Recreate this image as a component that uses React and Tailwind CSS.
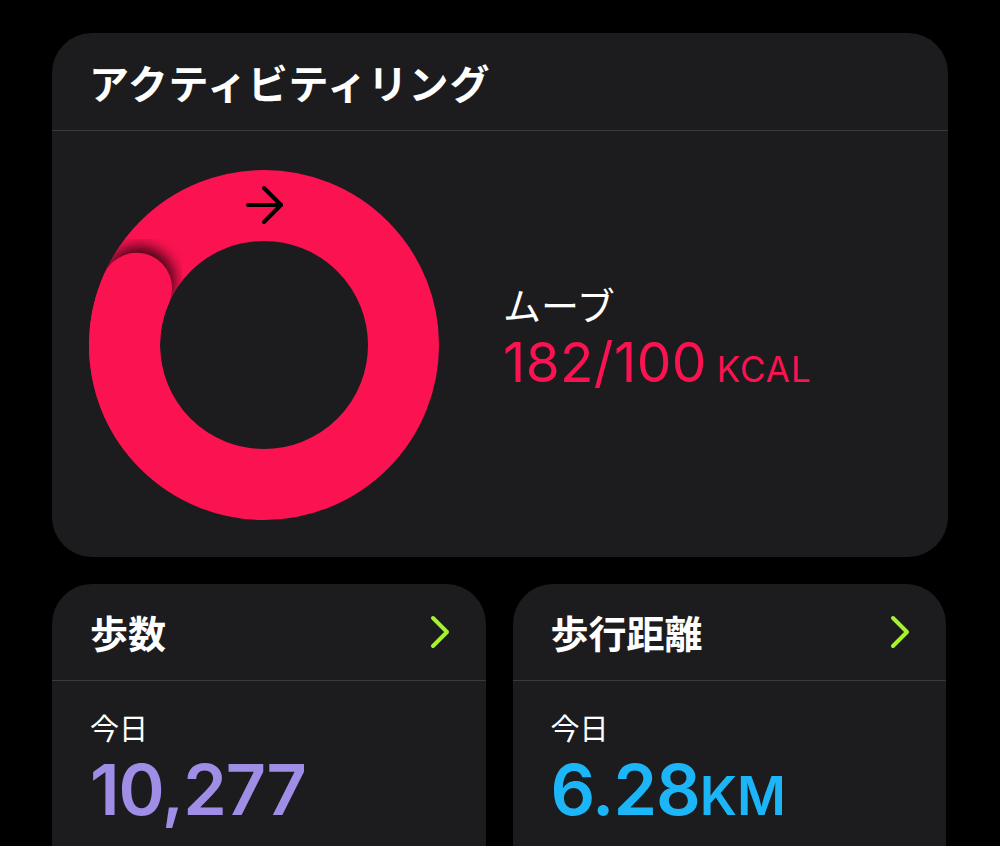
import React from 'react';

const jp = { fontFamily: '"Noto Sans CJK JP", "Noto Sans", sans-serif' };
const num = { fontFamily: 'Inter, "Noto Sans CJK JP", sans-serif' };

function Chevron() {
  return (
    <svg width="22" height="34" viewBox="0 0 22 34" fill="none">
      <polyline points="4,3 18,17 4,31" stroke="#a6f32d" strokeWidth="4" strokeLinecap="round" strokeLinejoin="round" />
    </svg>
  );
}

function MoveRing() {
  const cx = 175;
  const r = 139.5;
  return (
    <svg width="350" height="350" viewBox="0 0 350 350" className="shrink-0">
      <defs>
        <filter id="capShadow" x="-50%" y="-50%" width="200%" height="200%">
          <feGaussianBlur stdDeviation="7" />
        </filter>
        <mask id="ringMask">
          <circle cx={cx} cy={cx} r={r} stroke="white" strokeWidth="71" fill="none" />
        </mask>
      </defs>
      <circle cx={cx} cy={cx} r={r} stroke="#fb1351" strokeWidth="71" fill="none" />
      <g mask="url(#ringMask)">
        <circle cx="50.5" cy="111.5" r="35.5" fill="#000" opacity="0.75" filter="url(#capShadow)" />
      </g>
      <path d="M 62.1 257 A 139.5 139.5 0 0 1 47.6 118.3" stroke="#fb1351" strokeWidth="71" strokeLinecap="round" fill="none" />
      <g stroke="#000" strokeWidth="4" strokeLinecap="round" strokeLinejoin="round" fill="none">
        <line x1="159" y1="35" x2="192" y2="35" />
        <polyline points="175,18 192,35 175,52" />
      </g>
    </svg>
  );
}

function StatCard({ title, value, unit, color }) {
  return (
    <div className="flex-1 rounded-[40px] bg-[#1c1c1e] h-[300px]">
      <div className="flex h-[97px] items-center justify-between border-b border-[#3a3a3c] pl-[38px] pr-[35px]">
        <span className="text-[38px] font-bold text-white leading-none" style={jp}>{title}</span>
        <Chevron />
      </div>
      <div className="pl-[38px] pt-[28px]">
        <div className="text-[29px] text-white leading-[36px]" style={jp}>今日</div>
        <div className="mt-[10px] flex items-baseline font-semibold leading-none" style={{ ...num, color }}>
          <span className="text-[70px] tracking-[-1px]">{value}</span>
          {unit && <span className="text-[53px]">{unit}</span>}
        </div>
      </div>
    </div>
  );
}

export default function App() {
  return (
    <div className="min-h-screen bg-black pl-[52px] pr-[52px] pt-[33px] overflow-hidden h-[846px]">
      <div className="rounded-[40px] bg-[#1c1c1e] h-[524px]">
        <div className="flex h-[98px] items-center border-b border-[#3a3a3c] pl-[37px]">
          <span className="text-[40px] font-bold text-white leading-none tracking-[0.8px]" style={jp}>アクティビティリング</span>
        </div>
        <div className="flex items-center pl-[37px] pt-[39px]">
          <MoveRing />
          <div className="ml-[64px] -mt-[16px]">
            <div className="text-[38px] text-white leading-[40px]" style={jp}>ムーブ</div>
            <div className="mt-[11px] flex items-baseline leading-none text-[#fb1351]" style={num}>
              <span className="text-[55px] font-normal tracking-[0.3px]">182/100</span>
              <span className="ml-[10px] text-[35px] font-normal tracking-[1px]">KCAL</span>
            </div>
          </div>
        </div>
      </div>
      <div className="mt-[27px] mr-[2px] flex gap-[27px]">
        <StatCard title="歩数" value="10,277" color="#a08de6" />
        <StatCard title="歩行距離" value="6.28" unit="KM" color="#1cb5f7" />
      </div>
    </div>
  );
}
